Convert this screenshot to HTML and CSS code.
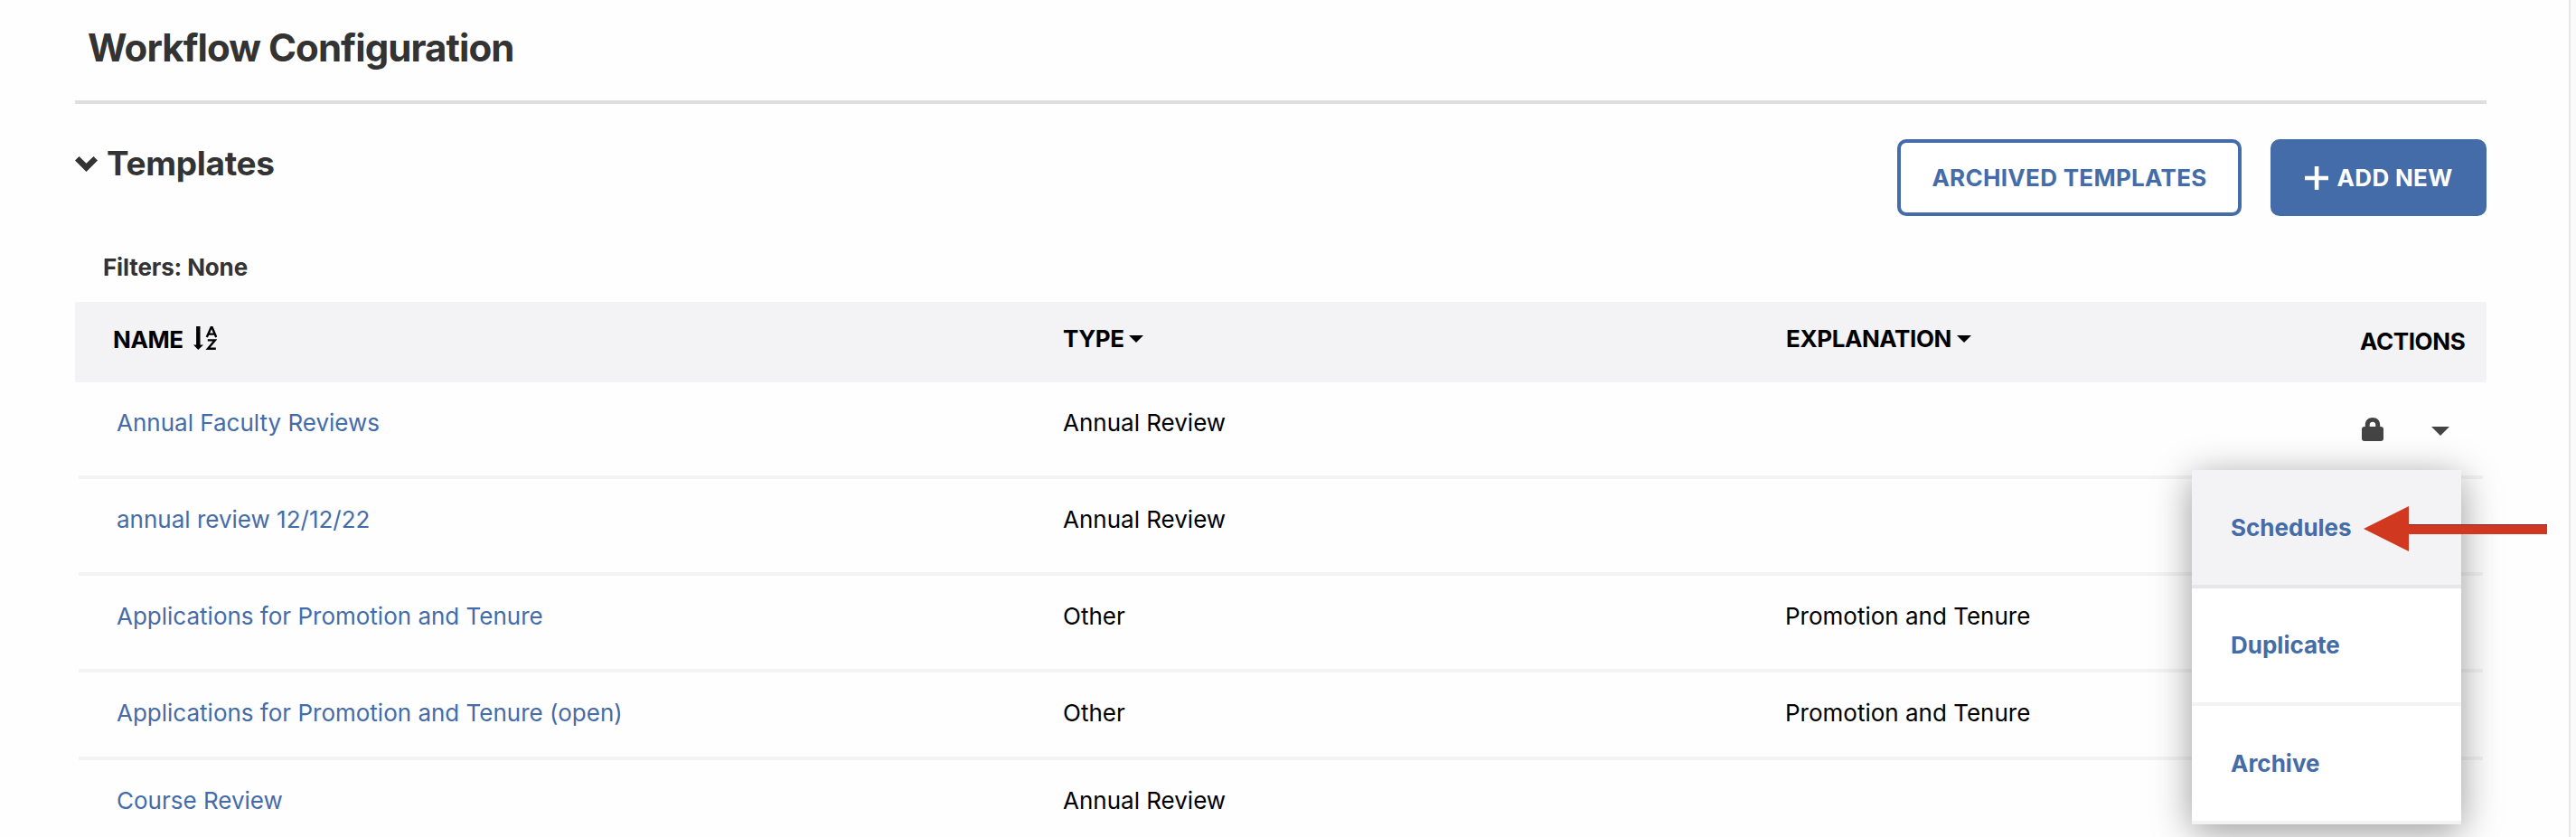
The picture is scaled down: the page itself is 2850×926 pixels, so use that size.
FILE: index.html
```html
<!DOCTYPE html>
<html lang="en">
   <head>
      <meta charset="utf-8">
      <title>Workflow Configuration</title>
      <link rel="stylesheet" href="styles.css">
   </head>
   <body>
      <div class="page">
          <h1 class="page-title">Workflow Configuration</h1>

          <!-- Section header -->
          <div class="section-header">
              <h2 class="section-title">
                  <svg class="icon-chevron" viewBox="0 0 25 17"><path d="M0 4.5 L4.5 0 L12.5 7.8 L20.5 0 L25 4.5 L12.5 17 Z"/></svg>
                  <span>Templates</span>
              </h2>
              <div class="section-actions">
                  <button class="btn btn-outline"><span>Archived Templates</span></button>
                  <button class="btn btn-primary">
                      <svg class="icon-plus" viewBox="0 0 26 26"><path d="M10.8 0h4.6v10.7H26v4.6H15.4V26h-4.6V15.3H0v-4.6h10.8z"/></svg>
                      <span>Add New</span>
                  </button>
              </div>
          </div>

          <div class="filters">Filters: None</div>

          <!-- Templates table -->
          <div class="table">
              <div class="table-head">
                  <div class="col-name">Name
                      <svg class="icon-sort" viewBox="0 0 26 26">
                          <path d="M3.1 0h4.4v20.4H11L5.3 26 0 20.4h3.1z"/>
                          <path class="line" d="M14.8 12L19.6 1.2h1L25.2 12M16.6 8.6h7M15.8 15.4h8L16 24.8h8.8"/>
                      </svg>
                  </div>
                  <div class="col-type">Type <svg class="icon-caret" viewBox="0 0 16 8"><path d="M0 0h16L8 8z"/></svg></div>
                  <div class="col-explanation">Explanation <svg class="icon-caret" viewBox="0 0 16 8"><path d="M0 0h16L8 8z"/></svg></div>
                  <div class="col-actions">Actions</div>
              </div>
              <div class="table-row">
                  <div class="col-name"><a href="#">Annual Faculty Reviews</a></div>
                  <div class="col-type">Annual Review</div>
                  <div class="col-explanation"></div>
                  <div class="col-actions row-actions">
                      <svg class="icon-lock" viewBox="0 0 24 26"><path fill-rule="evenodd" d="M3.8 10V8C3.8 3 7 0 12 0s8.2 3 8.2 8v2H21q3 0 3 3v10q0 3-3 3H3q-3 0-3-3V13q0-3 3-3zM8.7 10h6.6V8.4C15.3 6 14.2 4.8 12 4.8S8.7 6 8.7 8.4z"/></svg>
                      <svg class="icon-toggle" viewBox="0 0 20 10"><path d="M0 0h20L10 10z"/></svg>
                      <div class="menu">
                          <a class="menu-item active" href="#">Schedules</a>
                          <a class="menu-item" href="#">Duplicate</a>
                          <a class="menu-item" href="#">Archive</a>
                          <svg class="arrow" viewBox="0 0 203 50"><path d="M0 25L50 0v20h153v11H50v19z"/><path class="edge" d="M50 20.5h153"/></svg>
                      </div>
                  </div>
              </div>
              <div class="table-row">
                  <div class="col-name"><a href="#">annual review 12/12/22</a></div>
                  <div class="col-type">Annual Review</div>
                  <div class="col-explanation"></div>
              </div>
              <div class="table-row">
                  <div class="col-name"><a href="#">Applications for Promotion and Tenure</a></div>
                  <div class="col-type">Other</div>
                  <div class="col-explanation">Promotion and Tenure</div>
              </div>
              <div class="table-row compact">
                  <div class="col-name"><a href="#">Applications for Promotion and Tenure (open)</a></div>
                  <div class="col-type">Other</div>
                  <div class="col-explanation">Promotion and Tenure</div>
              </div>
              <div class="table-row">
                  <div class="col-name"><a href="#">Course Review</a></div>
                  <div class="col-type">Annual Review</div>
                  <div class="col-explanation"></div>
              </div>
          </div>
      </div>
   </body>
</html>
```
FILE: styles.css
```css
/* Global Styles */
* {
    box-sizing: border-box;
}

body {
    margin: 0;
    height: 926px;
    overflow: hidden;
    background-color: #fafafa;
    color: #333;
    font-family: Inter, "Liberation Sans", sans-serif;
    font-size: 26px;
    line-height: 40px;
}

a {
    color: #446ca9;
    text-decoration: none;
}

svg {
    fill: currentColor;
    flex: none;
}

.page {
    width: 2844px;
    height: 926px;
    padding: 0 91px 0 83px;
    border-right: 2px solid #e6e6e8;
    background-color: #fefefe;
}

.page-title {
    margin: 0;
    height: 115px;
    padding: 23px 14px 0;
    border-bottom: 4px solid #dedede;
    font-size: 42px;
    line-height: 60px;
    letter-spacing: -0.93px;
}

/* Section header */
.section-header {
    display: flex;
    justify-content: space-between;
    height: 161px;
    padding-top: 39px;
}

.section-title {
    display: flex;
    align-items: center;
    gap: 10px;
    height: 54px;
    margin: 0;
    font-size: 37px;
    letter-spacing: -0.3px;
}

.icon-chevron {
    width: 25px;
    height: 17px;
}

.section-actions {
    display: flex;
    gap: 32px;
}

.btn {
    display: flex;
    align-items: center;
    justify-content: center;
    height: 85px;
    padding: 0;
    border: 4px solid #446ca9;
    border-radius: 10px;
    font-family: inherit;
    font-size: 26px;
    font-weight: 700;
    letter-spacing: 0.3px;
    text-transform: uppercase;
}

.btn-outline {
    width: 381px;
    background-color: #fff;
    color: #446ca9;
}

.btn-primary {
    width: 239px;
    gap: 10px;
    background-color: #446ca9;
    color: #fff;
}

.icon-plus {
    width: 26px;
    height: 26px;
}

.filters {
    height: 58px;
    padding-left: 31px;
    font-weight: 700;
    letter-spacing: -0.15px;
}

/* Table */
.table-head,
.table-row {
    display: grid;
    grid-template-columns: 1093px 800px 635px 1fr;
}

.table-head {
    height: 89px;
    padding-top: 21px;
    border-radius: 2px;
    background-color: #f3f3f5;
    color: #000;
    font-weight: 700;
    letter-spacing: -0.4px;
    text-transform: uppercase;
}

.table-head .col-name {
    padding: 1px 0 0 42px;
}

.table-head .col-actions {
    padding-top: 3px;
}

.icon-sort {
    width: 26px;
    height: 26px;
    margin-left: 6px;
    vertical-align: -2px;
}

.icon-sort .line {
    fill: none;
    stroke: currentColor;
    stroke-width: 2.4;
}

.icon-caret {
    width: 16px;
    height: 8px;
    vertical-align: 5px;
}

.table-row {
    height: 107px;
    margin: 0 4px;
    padding-top: 25px;
    border-bottom: 4px solid #f3f3f4;
    color: #000;
    grid-template-columns: 1089px 799px 636px 1fr;
}

.table-row.compact {
    height: 97px;
}

.table-row .col-name {
    padding-left: 42px;
}

.row-actions {
    position: relative;
    display: flex;
    align-items: center;
    gap: 53px;
    height: 54px;
    padding-left: 2px;
    color: #444;
}

.icon-lock {
    width: 24px;
    height: 26px;
}

.icon-toggle {
    width: 20px;
    height: 10px;
    margin-top: 4px;
}

/* Actions menu */
.menu {
    position: absolute;
    top: 72px;
    right: 24px;
    z-index: 1;
    width: 298px;
    background-color: #fff;
    box-shadow: 0 8px 40px rgba(0, 0, 0, 0.4);
}

.menu-item {
    display: flex;
    align-items: center;
    height: 131px;
    padding-left: 43px;
    border-bottom: 4px solid #f3f3f4;
    font-weight: 700;
}

.menu-item:nth-child(2) {
    height: 130px;
}

.menu-item.active {
    background-color: #f3f3f5;
    border-bottom-color: #e7e7eb;
}

.arrow {
    position: absolute;
    top: 40px;
    left: 190px;
    width: 203px;
    height: 50px;
    color: #d03820;
}

.arrow .edge {
    stroke: #82283c;
    stroke-width: 1;
}
```
